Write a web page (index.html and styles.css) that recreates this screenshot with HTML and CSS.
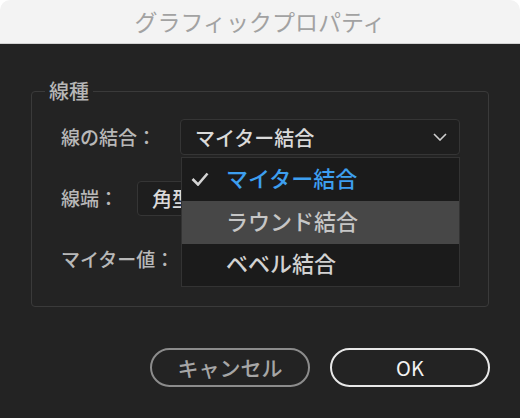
FILE: index.html
```html
<!DOCTYPE html>
<html lang="ja">
<head>
<meta charset="utf-8">
<link rel="stylesheet" href="styles.css">
</head>
<body>
<div class="window">
  <header class="titlebar">グラフィックプロパティ</header>
  <main class="content">
    <fieldset class="group">
      <legend class="legend">線種</legend>
      <div class="row">
        <span class="label">線の結合：</span>
        <div class="select select-join">
          <span class="select-text">マイター結合</span>
          <svg class="chevron" width="14" height="8" viewBox="0 0 14 8"><polyline points="1,1 7,7 13,1" fill="none" stroke="#cfcfcf" stroke-width="1.6"/></svg>
          <ul class="menu">
            <li class="item item-checked">
              <svg class="check" width="18" height="14" viewBox="0 0 18 14"><polyline points="1.5,7 7,12.5 16.5,1.5" fill="none" stroke="#d4d4d4" stroke-width="2.6"/></svg>
              <span>マイター結合</span>
            </li>
            <li class="item item-hover"><span>ラウンド結合</span></li>
            <li class="item"><span>ベベル結合</span></li>
          </ul>
        </div>
      </div>
      <div class="row">
        <span class="label">線端：</span>
        <div class="select select-cap">
          <span class="select-text">角型線端</span>
        </div>
      </div>
      <div class="row">
        <span class="label">マイター値：</span>
        <div class="select select-miter"></div>
      </div>
    </fieldset>
    <div class="buttons">
      <button class="btn btn-cancel">キャンセル</button>
      <button class="btn btn-ok">OK</button>
    </div>
  </main>
</div>
</body>
</html>
```
FILE: styles.css
```css
html, body {
  margin: 0;
  padding: 0;
  background: #ffffff;
}
body {
  width: 520px;
  height: 418px;
  overflow: hidden;
  font-family: "Noto Sans CJK JP", "Noto Sans", sans-serif;
}
.window {
  width: 520px;
  height: 418px;
  display: flex;
  flex-direction: column;
}
.titlebar {
  height: 43px;
  border-bottom: 1px solid #d2d2d2;
  background: #f3f3f3;
  border-radius: 10px 10px 0 0;
  color: #a2a2a2;
  font-size: 23px;
  line-height: 43px;
  text-align: center;
}
.content {
  flex: 1;
  background: #232323;
  padding: 35px 30px 0 31px;
  display: flex;
  flex-direction: column;
}
.group {
  margin: 0;
  border: 1px solid #3a3a3a;
  border-radius: 4px;
  padding: 16px 0 29px 29px;
  display: flex;
  flex-direction: column;
  gap: 25px;
  width: 458px;
  box-sizing: border-box;
}
.legend {
  padding: 0 4px;
  margin-left: -16px;
  color: #b6b6b6;
  font-size: 20px;
  line-height: 24px;
  font-weight: 500;
}
.row {
  display: flex;
  align-items: center;
  height: 36px;
}
.label {
  color: #b8b8b8;
  font-size: 19px;
  font-weight: 500;
  line-height: 36px;
  white-space: nowrap;
}
.select {
  position: relative;
  height: 36px;
  box-sizing: border-box;
  border: 1px solid #353535;
  border-radius: 4px;
  background: #1e1e1e;
  display: flex;
  align-items: center;
  padding-left: 14px;
  color: #dadada;
  font-size: 20px;
  font-weight: 500;
}
.select-join {
  margin-left: 24px;
  width: 280px;
}
.select-cap {
  margin-left: 19px;
  width: 323px;
  height: 35px;
}
.select-miter {
  margin-left: 10px;
  width: 276px;
}
.select-text {
  flex: 1;
  white-space: nowrap;
  overflow: hidden;
}
.chevron {
  margin-right: 12px;
}
.menu {
  position: absolute;
  top: 37px;
  left: 0;
  width: 279px;
  margin: 0;
  padding: 0;
  list-style: none;
  background: #1b1b1b;
  border: 1px solid #333333;
  box-sizing: border-box;
  z-index: 2;
}
.item {
  height: 43px;
  box-sizing: border-box;
  padding-bottom: 6px;
  position: relative;
  display: flex;
  align-items: center;
  padding-left: 44px;
  color: #d2d2d2;
  font-size: 22px;
  font-weight: 500;
  white-space: nowrap;
}
.item:last-child {
  height: 42px;
}
.item-checked {
  color: #3d9ff0;
}
.item-hover {
  background: #474747;
  color: #c6c6c6;
}
.check {
  position: absolute;
  left: 9px;
  top: 14px;
}
.buttons {
  display: flex;
  justify-content: flex-end;
  gap: 20px;
  margin-top: 41px;
}
.btn {
  width: 160px;
  height: 39px;
  box-sizing: border-box;
  border-radius: 20px;
  background: #232323;
  font-family: "Noto Sans CJK JP", "Noto Sans", sans-serif;
  font-size: 21px;
  font-weight: 500;
  line-height: 1;
  padding: 0;
}
.btn-cancel {
  border: 2.5px solid #8c8c8c;
  color: #a6a6a6;
}
.btn-ok {
  border: 2.5px solid #e8e8e8;
  color: #f2f2f2;
  font-size: 20px;
  font-weight: 400;
}
```
